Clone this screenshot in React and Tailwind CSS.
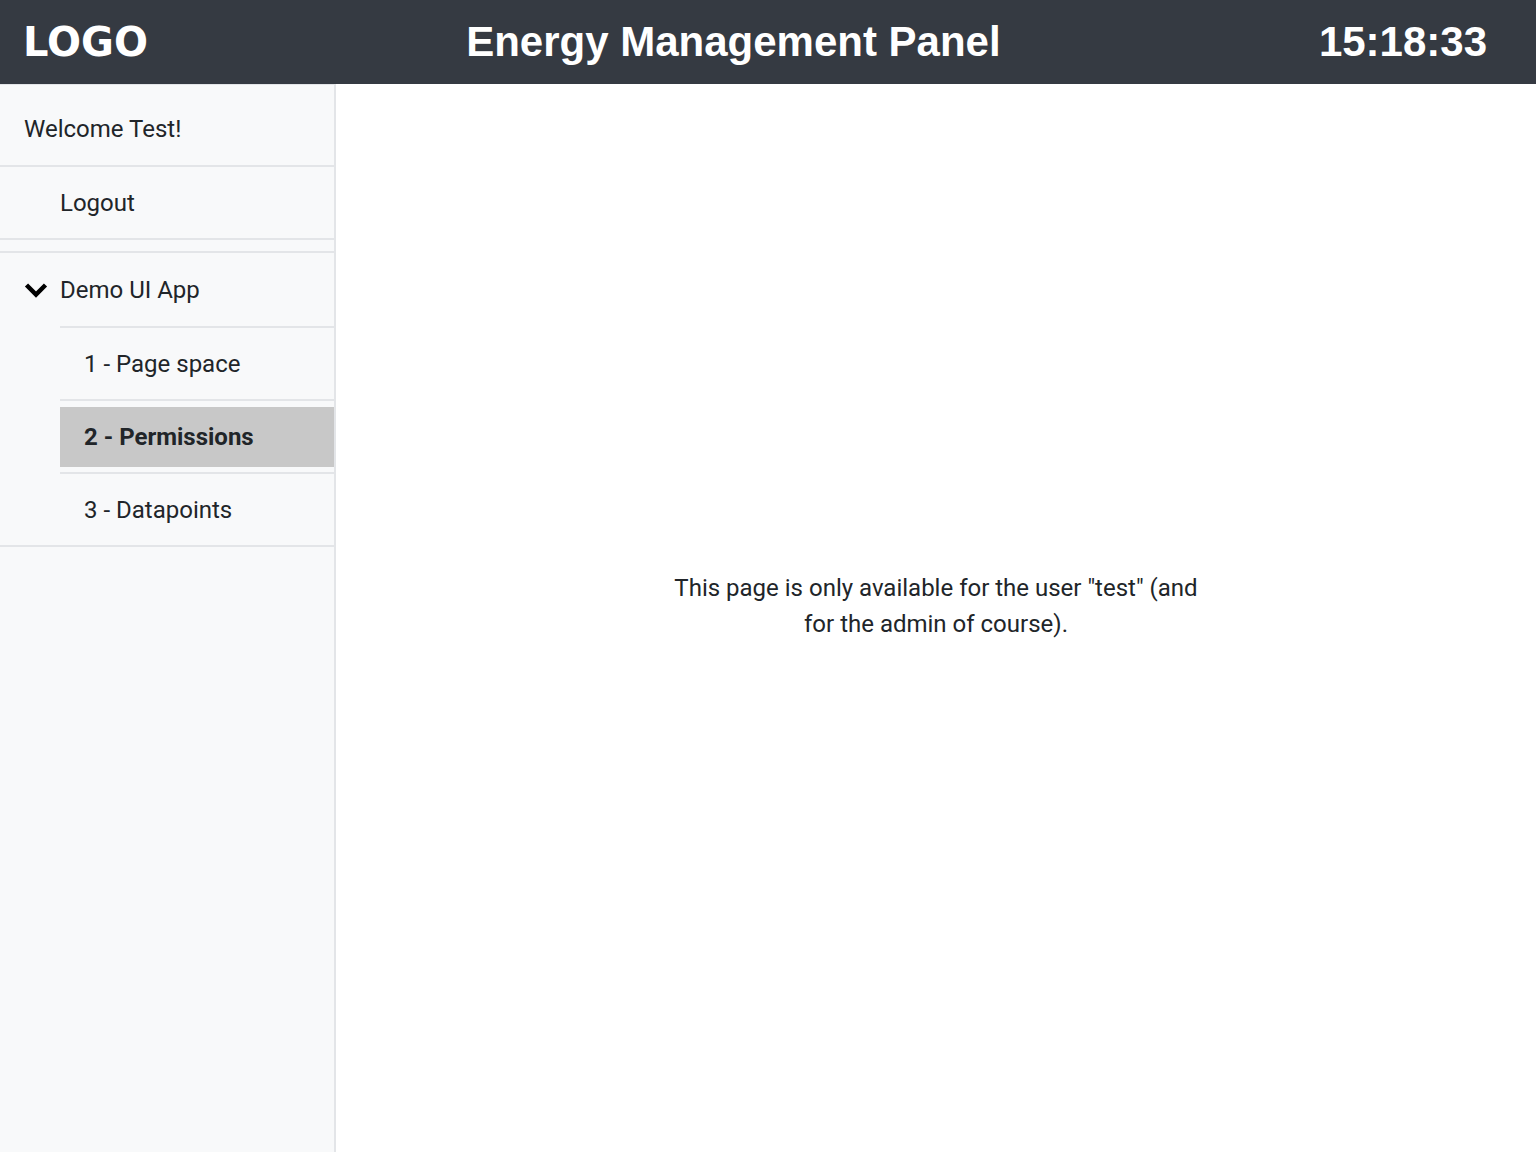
import React from "react";

function Chevron() {
  return (
    <svg width="24" height="16" viewBox="0 0 24 16" className="shrink-0">
      <path d="M2.5 3 L12 12.5 L21.5 3" fill="none" stroke="#000" strokeWidth="4.5" strokeLinecap="butt" strokeLinejoin="miter" />
    </svg>
  );
}

export default function App() {
  return (
    <div className="w-[1536px] h-[1152px] flex flex-col bg-white text-[#212529]" style={{ fontFamily: "Roboto, 'Noto Sans', sans-serif" }}>
      <header className="h-[84px] shrink-0 bg-[#353a42] text-white flex items-center justify-between pl-6 pr-[49px]">
        <div className="text-[40px] font-bold leading-none -ml-[1px]" style={{ fontFamily: "'DejaVu Sans', sans-serif" }}>LOGO</div>
        <div className="text-[42px] font-bold leading-none" style={{ fontFamily: "'Liberation Sans', Arial, sans-serif" }}>Energy Management Panel</div>
        <div className="text-[42px] font-bold leading-none" style={{ fontFamily: "'Liberation Sans', Arial, sans-serif" }}>15:18:33</div>
      </header>
      <div className="flex flex-1 min-h-0">
        <aside className="w-[336px] shrink-0 bg-[#f8f9fa] border-r-2 border-[#e3e5e8] border-t border-t-[#e3e5e8] text-[24px]">
          <div className="h-[82px] flex items-center pl-6 pt-[8px] border-b-2 border-[#e3e5e8]">Welcome Test!</div>
          <div className="h-[73px] flex items-center pl-[60px] border-b-2 border-[#e3e5e8]">Logout</div>
          <div className="h-[13px] border-b-2 border-[#e3e5e8]"></div>
          <div className="h-[73px] flex items-center pl-6 gap-[12px]">
            <Chevron />
            <span>Demo UI App</span>
          </div>
          <div className="ml-[60px] border-t-2 border-[#e3e5e8]">
            <div className="h-[73px] flex items-center pl-6 border-b-2 border-[#e3e5e8]">1 - Page space</div>
            <div className="h-[73px] pt-[6px] border-b-2 border-[#e3e5e8]">
              <div className="h-[60px] bg-[#c8c8c8] flex items-center pl-6 font-bold">2 - Permissions</div>
            </div>
            <div className="h-[71px] flex items-center pl-6">3 - Datapoints</div>
          </div>
          <div className="border-b-2 border-[#e3e5e8]"></div>
        </aside>
        <main className="flex-1 flex items-center justify-center pb-[24px]">
          <p className="w-[540px] text-center text-[24px] leading-[36px]">
            This page is only available for the user "test" (and for the admin of course).
          </p>
        </main>
      </div>
    </div>
  );
}
